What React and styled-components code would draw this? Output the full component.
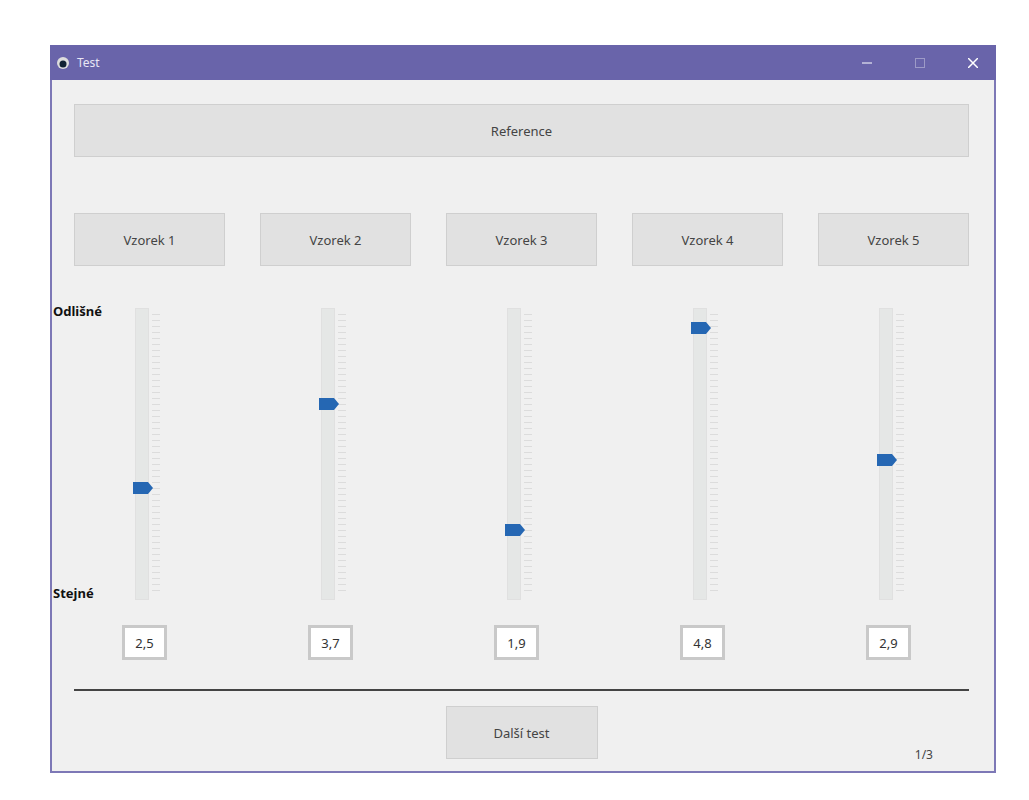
import React from "react";
import styled, { createGlobalStyle } from "styled-components";

const Global = createGlobalStyle`
  body { margin: 0; background: #fff; font-family: "Segoe UI", "Noto Sans", "Liberation Sans", sans-serif; }
`;

const Page = styled.div`
  width: 1029px;
  height: 800px;
  padding: 45px 0 0 50px;
  box-sizing: border-box;
`;

const Window = styled.div`
  width: 946px;
  height: 728px;
  border: 2px solid #7d78b6;
  border-top: none;
  background: #f0f0f0;
  display: flex;
  flex-direction: column;
  box-sizing: border-box;
`;

const TitleBar = styled.div`
  height: 35px;
  margin: 0 -2px;
  background: #6964aa;
  display: flex;
  align-items: center;
  color: #fff;
  font-size: 12px;
  padding-left: 6px;
  gap: 7px;
`;

const Title = styled.span`
  flex: 1;
  color: #e8e6f5;
`;

const WinBtn = styled.div`
  width: 46px;
  height: 35px;
  display: flex;
  align-items: center;
  justify-content: center;
  opacity: ${(p) => (p.$dim ? 0.35 : 1)};
`;

const Body = styled.div`
  flex: 1;
  padding: 24px 25px 0 22px;
  display: flex;
  flex-direction: column;
  position: relative;
`;

const Button = styled.button`
  height: 53px;
  width: ${(p) => p.$w || "auto"};
  background: #e1e1e1;
  border: 1px solid #cfcfcf;
  font-family: inherit;
  font-size: 13px;
  color: #444;
  padding: 0;
`;

const Row = styled.div`
  display: grid;
  grid-template-columns: repeat(5, 151px);
  justify-content: space-between;
  margin-top: ${(p) => p.$mt || 0}px;
`;

const Col = styled.div`
  display: flex;
  flex-direction: column;
  align-items: center;
`;

const SliderWrap = styled.div`
  position: relative;
  height: 292px;
  width: 26px;
  margin-right: 3px;
`;

const Groove = styled.div`
  position: absolute;
  left: 0;
  top: 0;
  width: 14px;
  height: 100%;
  background: #e5e7e6;
  border: 1px solid #e0e0e0;
  box-sizing: border-box;
`;

const Ticks = styled.div`
  position: absolute;
  left: 17px;
  top: 6px;
  bottom: 6px;
  width: 8px;
  background: repeating-linear-gradient(#dcdcdc 0 1px, transparent 1px 6px);
`;

const Handle = styled.svg`
  position: absolute;
  left: -3px;
`;

const ValueBox = styled.div`
  margin-top: 25px;
  width: 45px;
  height: 35px;
  border: 3px solid #c9c9c9;
  background: #fff;
  box-sizing: border-box;
  display: flex;
  align-items: center;
  justify-content: center;
  font-size: 13px;
  color: #333;
  margin-right: 10px;
`;

const Label = styled.div`
  position: absolute;
  left: 1px;
  top: ${(p) => p.$top}px;
  font-size: 13px;
  font-weight: bold;
  color: #111;
`;

const Divider = styled.div`
  margin-top: 29px;
  height: 2px;
  background: #444;
`;

const Footer = styled.div`
  display: flex;
  justify-content: center;
  margin-top: 15px;
  position: relative;
`;

const Counter = styled.div`
  position: absolute;
  right: 36px;
  bottom: -4px;
  font-size: 12px;
  color: #444;
`;

const values = [2.5, 3.7, 1.9, 4.8, 2.9];

export default function App() {
  return (
    <Page>
      <Global />
      <Window>
        <TitleBar>
          <svg width="14" height="14" viewBox="0 0 14 14">
            <circle cx="7" cy="7" r="6" fill="#ddd" />
            <circle cx="7" cy="8" r="3.5" fill="#123" />
          </svg>
          <Title>Test</Title>
          <WinBtn>
            <svg width="10" height="10"><line x1="0" y1="5" x2="10" y2="5" stroke="#fff" /></svg>
          </WinBtn>
          <WinBtn $dim>
            <svg width="10" height="10"><rect x="0.5" y="0.5" width="9" height="9" fill="none" stroke="#fff" /></svg>
          </WinBtn>
          <WinBtn>
            <svg width="10" height="10"><path d="M0 0L10 10M10 0L0 10" stroke="#fff" strokeWidth="1.5" /></svg>
          </WinBtn>
        </TitleBar>
        <Body>
          <Button>Reference</Button>
          <Row $mt={56}>
            {values.map((_, i) => (
              <Button key={i}>Vzorek {i + 1}</Button>
            ))}
          </Row>
          <Label $top={222}>Odlišné</Label>
          <Label $top={504}>Stejné</Label>
          <Row $mt={42}>
            {values.map((v, i) => (
              <Col key={i}>
                <SliderWrap>
                  <Groove />
                  <Ticks />
                  <Handle
                    width="21"
                    height="12"
                    viewBox="0 0 21 12"
                    style={{ top: 6 + (5 - v) * 69.6 - 6 }}
                  >
                    <path d="M1 0H16L21 6L16 12H1Z" fill="#2567b3" />
                  </Handle>
                </SliderWrap>
                <ValueBox>{String(v).replace(".", ",")}</ValueBox>
              </Col>
            ))}
          </Row>
          <Divider />
          <Footer>
            <Button $w="152px">Další test</Button>
            <Counter>1/3</Counter>
          </Footer>
        </Body>
      </Window>
    </Page>
  );
}
